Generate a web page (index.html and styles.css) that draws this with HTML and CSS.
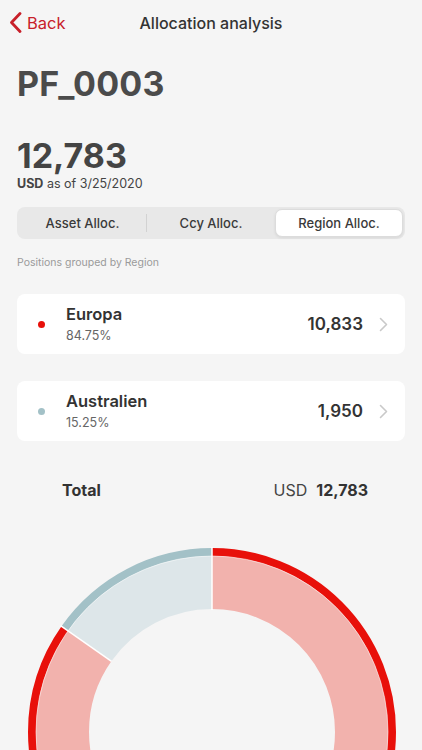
FILE: index.html
```html
<!DOCTYPE html>
<html>
<head>
<meta charset="utf-8">
<link rel="stylesheet" href="styles.css">
</head>
<body>
<div class="app">
    <!-- Navigation bar -->
    <div class="nav">
        <a class="back">
            <svg width="13" height="21" viewBox="0 0 13 21"><path d="M11 1.5 L2.5 10.5 L11 19.5" fill="none" stroke="#c8202a" stroke-width="2.8" stroke-linecap="round" stroke-linejoin="round"/></svg>
            <span>Back</span>
        </a>
        <div class="nav-title">Allocation analysis</div>
    </div>

    <h1 class="portfolio">PF_0003</h1>

    <div class="amount">12,783</div>
    <div class="asof"><b>USD</b> as of 3/25/2020</div>

    <!-- Segmented control -->
    <div class="segments">
        <span class="seg">Asset Alloc.</span>
        <span class="seg">Ccy Alloc.</span>
        <span class="seg active">Region Alloc.</span>
    </div>

    <div class="caption">Positions grouped by Region</div>

    <div class="card">
        <span class="dot red"></span>
        <div class="card-text">
            <div class="name">Europa</div>
            <div class="pct">84.75%</div>
        </div>
        <div class="value">10,833</div>
        <svg class="chev" width="9" height="15" viewBox="0 0 9 15"><path d="M1.5 1.5 L7.5 7.5 L1.5 13.5" fill="none" stroke="#c9c9c9" stroke-width="1.6" stroke-linecap="round" stroke-linejoin="round"/></svg>
    </div>

    <div class="card">
        <span class="dot grey"></span>
        <div class="card-text">
            <div class="name">Australien</div>
            <div class="pct">15.25%</div>
        </div>
        <div class="value">1,950</div>
        <svg class="chev" width="9" height="15" viewBox="0 0 9 15"><path d="M1.5 1.5 L7.5 7.5 L1.5 13.5" fill="none" stroke="#c9c9c9" stroke-width="1.6" stroke-linecap="round" stroke-linejoin="round"/></svg>
    </div>

    <div class="total">
        <span class="total-label">Total</span>
        <span class="total-ccy">USD</span>
        <span class="total-value">12,783</span>
    </div>

    <!-- Donut chart: Europa 84.75%, Australien 15.25% -->
    <div class="chart">
        <svg width="370" height="370" viewBox="-185 -185 370 370">
            <g transform="rotate(-90)">
                <circle r="149.5" fill="none" stroke="#f2b2ad" stroke-width="53" stroke-dasharray="796.1 939.3"/>
                <circle r="149.5" fill="none" stroke="#dde6e9" stroke-width="53" stroke-dasharray="143.2 939.3" stroke-dashoffset="-796.1"/>
                <circle r="180" fill="none" stroke="#e8100a" stroke-width="8" stroke-dasharray="958.5 1131" />
                <circle r="180" fill="none" stroke="#a3c1c7" stroke-width="8" stroke-dasharray="172.5 1131" stroke-dashoffset="-958.5"/>
                <circle r="176" fill="none" stroke="#ffffff" stroke-width="0.8" opacity="0.7"/>
            </g>
            <line x1="0" y1="-122" x2="0" y2="-185" stroke="#ffffff" stroke-width="1.5"/>
            <line x1="-100.5" y1="-70.6" x2="-151.5" y2="-106.4" stroke="#ffffff" stroke-width="1.5"/>
        </svg>
    </div>
</div>
</body>
</html>
```

FILE: styles.css
```css
* {
    margin: 0;
    padding: 0;
    box-sizing: border-box;
}

html, body {
    background: #f5f5f5;
    overflow: hidden;
}

body {
    font-family: Inter, "Liberation Sans", sans-serif;
    color: #333333;
    height: 750px;
}

.app {
    width: 422px;
    height: 750px;
    padding: 0 17px;
    overflow: hidden;
}

.nav {
    position: relative;
    height: 44px;
    display: flex;
    align-items: center;
    justify-content: center;
}

.nav .back {
    position: absolute;
    left: -8px;
    top: 12px;
    display: flex;
    align-items: center;
    gap: 5px;
    color: #c8202a;
    font-size: 16.5px;
}

.nav-title {
    font-size: 16px;
    font-weight: 500;
    color: #333333;
    margin-top: 1px;
}

.portfolio {
    margin-top: 20px;
    font-size: 34px;
    line-height: 40px;
    font-weight: 700;
    color: #4b4b4b;
    letter-spacing: 0.2px;
}

.amount {
    margin-top: 33px;
    font-size: 34px;
    line-height: 38px;
    font-weight: 700;
    color: #444444;
}

.asof {
    font-size: 12.5px;
    line-height: 18px;
    color: #444444;
}

.asof b {
    font-weight: 700;
}

.segments {
    margin-top: 14px;
    height: 32px;
    background: #e8e8e8;
    border-radius: 8px;
    display: grid;
    grid-template-columns: 1fr 1fr 1fr;
    padding: 2px;
}

.seg {
    display: flex;
    align-items: center;
    justify-content: center;
    font-size: 13px;
    font-weight: 500;
    color: #3a3a3a;
}

.seg:first-child {
    border-right: 1px solid #d2d2d2;
    margin: 5px 0;
}

.seg.active {
    background: #ffffff;
    border: 1px solid #dcdcdc;
    border-radius: 7px;
    box-shadow: 0 1px 3px rgba(0, 0, 0, 0.08);
}

.caption {
    margin-top: 17px;
    font-size: 10.5px;
    line-height: 14px;
    color: #9a9a9a;
}

.card {
    margin-top: 24px;
    height: 60px;
    background: #ffffff;
    border-radius: 8px;
    display: flex;
    align-items: center;
    padding: 0 17px 0 21px;
}

.card + .card {
    margin-top: 27px;
}

.dot {
    width: 7px;
    height: 7px;
    border-radius: 50%;
    margin-right: 21px;
}

.dot.red { background: #e8100a; }
.dot.grey { background: #a3c1c7; }

.card-text {
    flex: 1;
}

.name {
    font-size: 16.5px;
    font-weight: 600;
    line-height: 21px;
    color: #333333;
}

.pct {
    margin-top: 3px;
    font-size: 12.5px;
    line-height: 16px;
    color: #666666;
}

.value {
    font-size: 17px;
    font-weight: 600;
    color: #333333;
    margin-right: 16px;
}

.total {
    margin-top: 37px;
    display: flex;
    align-items: center;
    padding: 0 37px 0 45px;
    height: 24px;
}

.total-label {
    flex: 1;
    font-size: 16px;
    font-weight: 700;
    color: #333333;
}

.total-ccy {
    font-size: 16px;
    color: #444444;
    margin-right: 9px;
}

.total-value {
    font-size: 16px;
    font-weight: 700;
    color: #333333;
}

.chart {
    margin-top: 45px;
    margin-left: 10px;
}

.chart svg {
    display: block;
}
```
